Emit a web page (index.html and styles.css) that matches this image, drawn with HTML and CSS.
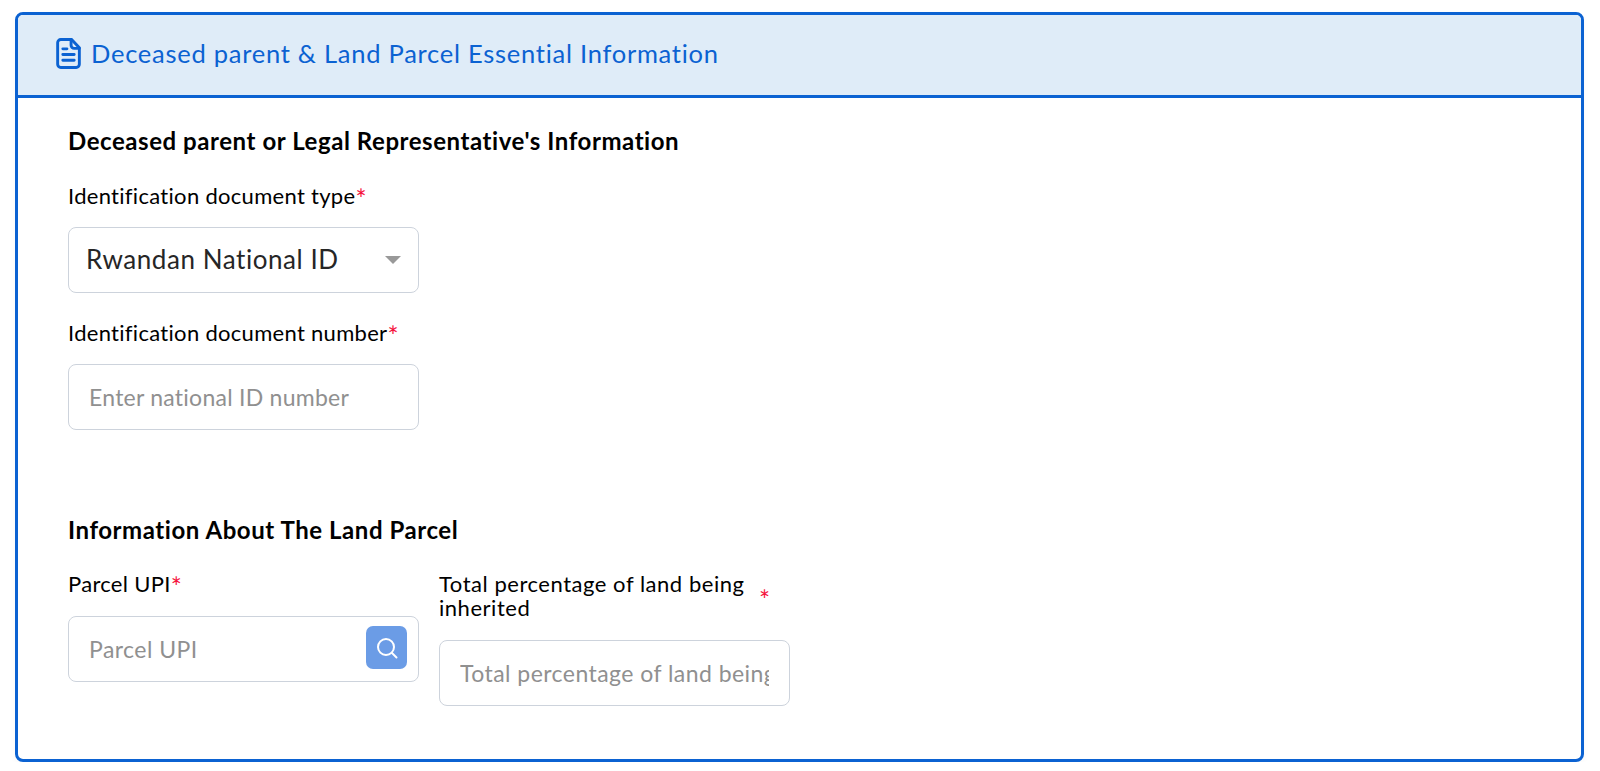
FILE: index.html
```html
<!DOCTYPE html>
<html lang="en">
<head>
    <meta charset="UTF-8">
    <meta name="viewport" content="width=device-width, initial-scale=1.0">
    <title>Land Parcel Information</title>
    <link rel="stylesheet" href="styles.css">
</head>
<body>
    <div class="card">
        <div class="card-header">
            <svg class="doc-icon" viewBox="0 0 24 30" fill="none" stroke="currentColor" stroke-width="2.8" stroke-linecap="round" stroke-linejoin="round">
                <path d="M4.5 1.5h10.5l7.5 8v16a3 3 0 0 1-3 3h-15a3 3 0 0 1-3-3v-21a3 3 0 0 1 3-3z"/>
                <path d="M14.5 1.5v5.5a3 3 0 0 0 3 3h5"/>
                <path d="M6.5 10.5h4M6.5 16h11M6.5 21.5h11"/>
            </svg>
            <span>Deceased parent &amp; Land Parcel Essential Information</span>
        </div>
        <div class="card-body">
            <h3 class="section-title">Deceased parent or Legal Representative's Information</h3>
            <div class="field">
                <label class="field-label">Identification document type<span class="req">*</span></label>
                <div class="control select-control">
                    <span>Rwandan National ID</span>
                    <span class="caret"></span>
                </div>
            </div>
            <div class="field">
                <label class="field-label">Identification document number<span class="req">*</span></label>
                <div class="control">
                    <input type="text" placeholder="Enter national ID number">
                </div>
            </div>

            <h3 class="section-title second">Information About The Land Parcel</h3>
            <div class="parcel-row">
                <div class="field">
                    <label class="field-label">Parcel UPI<span class="req">*</span></label>
                    <div class="control search-control">
                        <input type="text" placeholder="Parcel UPI">
                        <button class="search-btn" type="button">
                            <svg viewBox="0 0 24 24" fill="none" stroke="#fff" stroke-width="2" stroke-linecap="round">
                                <circle cx="11" cy="11" r="8"/>
                                <path d="M17 17l4.5 4.5"/>
                            </svg>
                        </button>
                    </div>
                </div>
                <div class="field">
                    <label class="field-label two-line">
                        <span class="label-text">Total percentage of land being inherited</span>
                        <span class="req">*</span>
                    </label>
                    <div class="control">
                        <input type="text" placeholder="Total percentage of land being inherited">
                    </div>
                </div>
            </div>
        </div>
    </div>
</body>
</html>
```

FILE: styles.css
```css
* {
    box-sizing: border-box;
}
body {
    margin: 0;
    padding: 12px 16px 0 15px;
    background: #fff;
    font-family: 'Lato', 'Open Sans', sans-serif;
    color: #000;
}
.card {
    height: 750px;
    border: 3px solid #0b62d2;
    border-radius: 8px;
    overflow: hidden;
    box-shadow: 0 3px 6px rgba(0, 0, 0, 0.03);
}
.card-header {
    display: flex;
    align-items: center;
    gap: 10px;
    height: 83px;
    padding: 0 0 4px 38px;
    background: #dfecf8;
    border-bottom: 3px solid #0b62d2;
    color: #0b62d2;
    font-size: 25.5px;
    letter-spacing: 0.74px;
}
.doc-icon {
    width: 25px;
    height: 31px;
}
.card-body {
    padding: 29px 0 0 50px;
}
.section-title {
    margin: 0 0 29px;
    font-size: 24px;
    line-height: 28px;
    font-weight: 700;
    letter-spacing: 0.56px;
}
.section-title.second {
    margin-top: 86px;
    margin-bottom: 28px;
}
.field {
    width: 351px;
    margin-bottom: 28px;
}
.field-label {
    display: block;
    margin-bottom: 19px;
    font-size: 22px;
    line-height: 24px;
    letter-spacing: 0.3px;
}
.req {
    color: #f5123c;
    font-size: 26px;
    line-height: 0;
    vertical-align: -5px;
}
.control {
    display: flex;
    align-items: center;
    height: 66px;
    padding: 0 20px;
    border: 1.5px solid #cdd3dc;
    border-radius: 8px;
}
.control input {
    flex: 1;
    min-width: 0;
    border: none;
    outline: none;
    padding: 0;
    font-family: inherit;
    font-size: 23px;
    letter-spacing: 0.25px;
    color: #222;
}
.control input::placeholder {
    color: #909090;
    opacity: 1;
}
.select-control {
    justify-content: space-between;
    padding: 0 17px 2px 17px;
    font-size: 26px;
    letter-spacing: 0.55px;
    color: #262626;
}
.caret {
    width: 0;
    height: 0;
    margin-top: 2px;
    border-left: 8px solid transparent;
    border-right: 8px solid transparent;
    border-top: 8px solid #999;
}
.search-control {
    padding-right: 11px;
}
.search-btn {
    display: flex;
    align-items: center;
    justify-content: center;
    width: 41px;
    height: 43px;
    margin-bottom: 3px;
    padding: 0;
    border: none;
    border-radius: 7px;
    background: #6b9ce6;
}
.search-btn svg {
    width: 24px;
    height: 24px;
}
.parcel-row {
    display: flex;
    gap: 20px;
}
.parcel-row .field-label {
    margin-bottom: 20px;
}
.parcel-row .control input {
    letter-spacing: 0.45px;
}
.parcel-row .two-line {
    display: flex;
    gap: 8px;
    margin-bottom: 20px;
}
.two-line .label-text {
    width: 312px;
    letter-spacing: 0.53px;
}
.two-line .req {
    padding-top: 28px;
}
```
